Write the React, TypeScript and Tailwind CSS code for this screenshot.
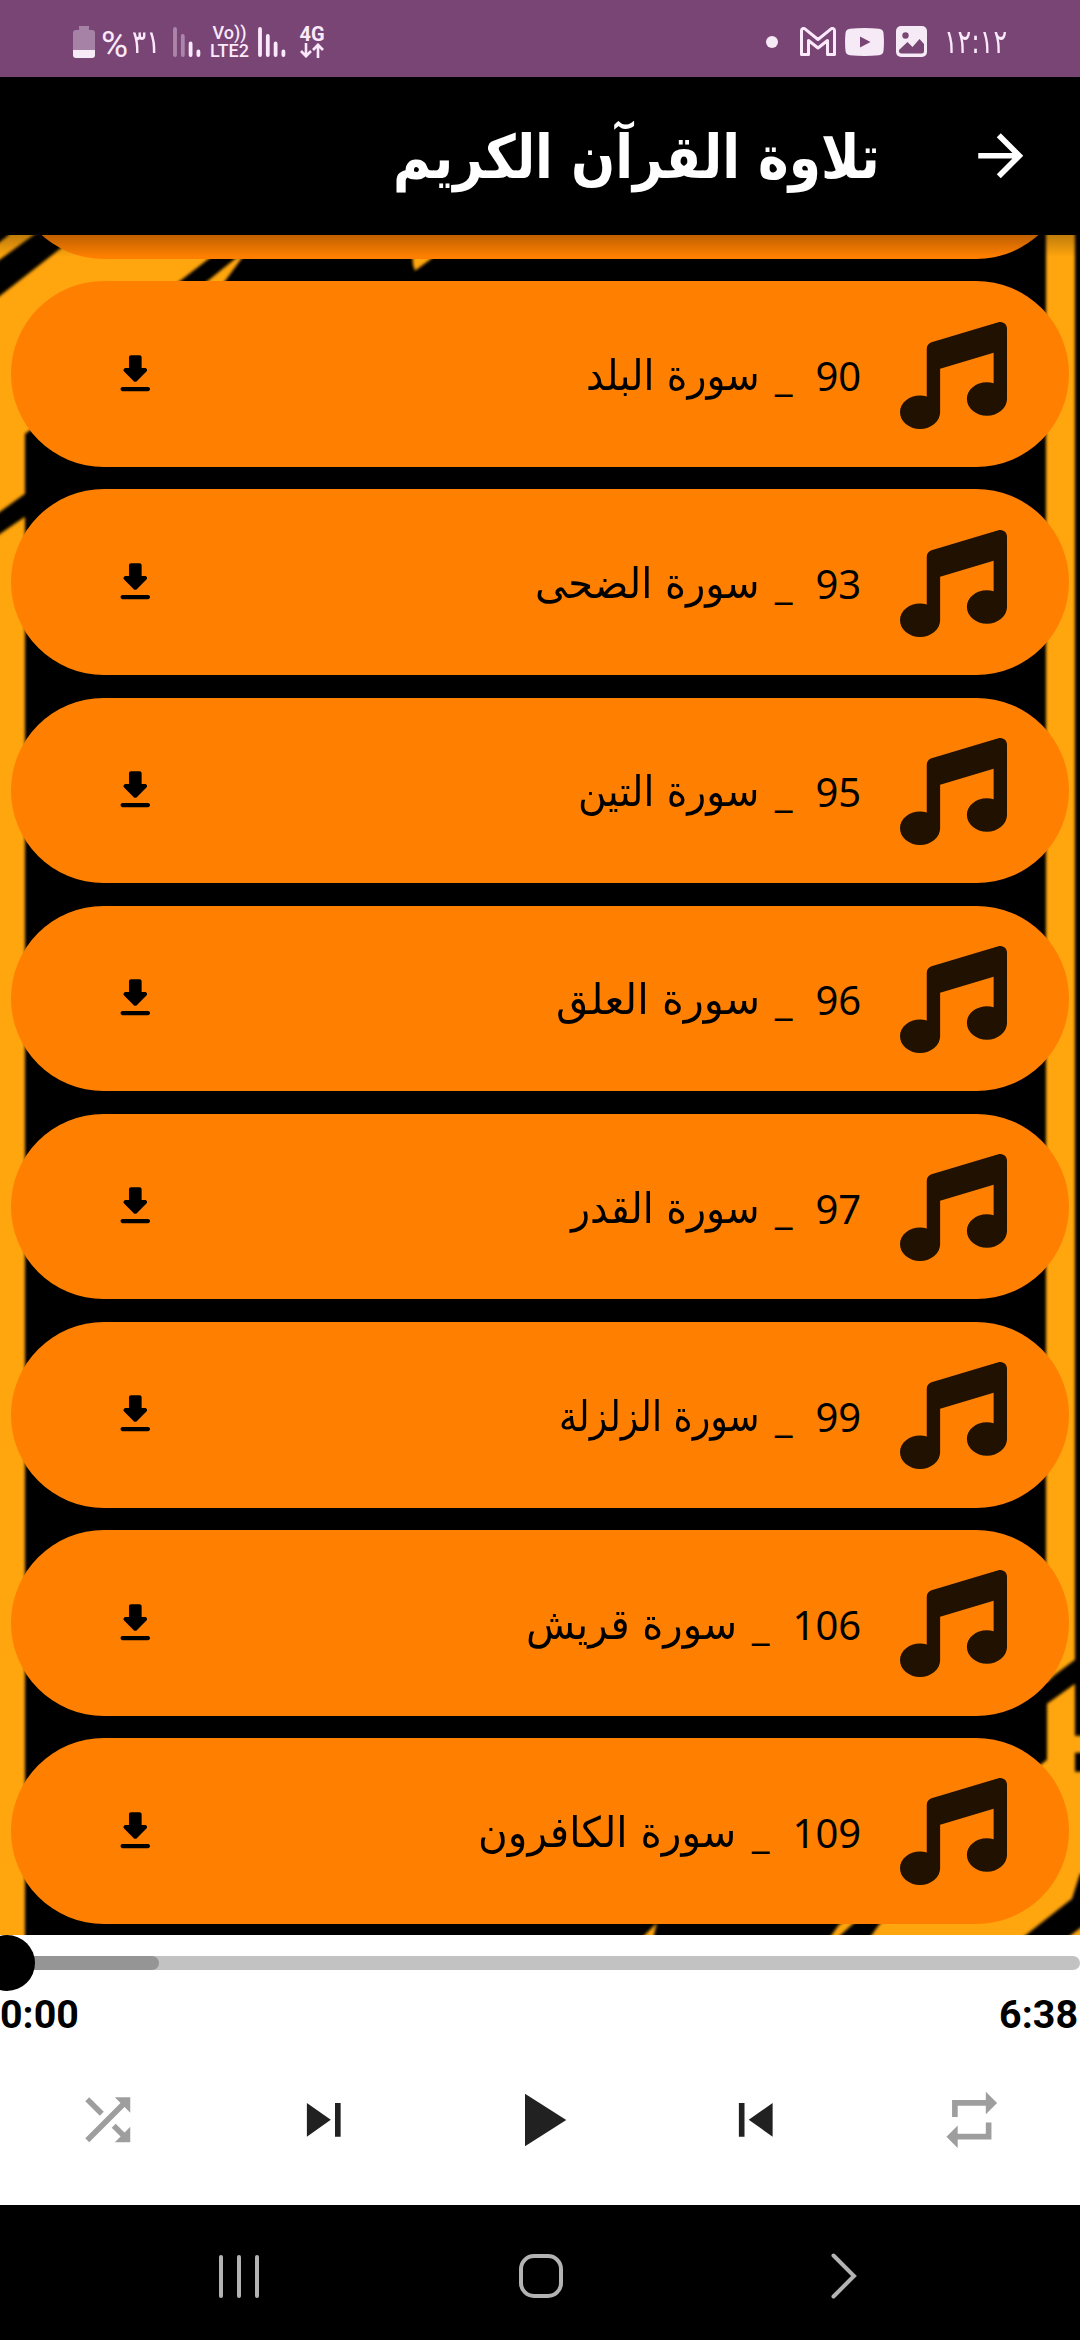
import React, { useLayoutEffect, useRef, useState } from "react";
import { FaMusic } from "react-icons/fa6";
import {
  MdArrowForward,
  MdPlayArrow,
  MdRepeat,
  MdShuffle,
  MdSkipNext,
  MdSkipPrevious,
} from "react-icons/md";

const surahs = [
  { number: "90", name: "سورة البلد", width: 174 },
  { number: "93", name: "سورة الضحى", width: 225 },
  { number: "95", name: "سورة التين", width: 181 },
  { number: "96", name: "سورة العلق", width: 204 },
  { number: "97", name: "سورة القدر", width: 189 },
  { number: "99", name: "سورة الزلزلة", width: 200 },
  { number: "106", name: "سورة قريش", width: 211 },
  { number: "109", name: "سورة الكافرون", width: 258 },
];

// Squeezes a single line of text into a fixed width
const FitText = ({ text, width }: { text: string; width: number }) => {
  const ref = useRef<HTMLSpanElement>(null);
  const [scale, setScale] = useState(1);

  useLayoutEffect(() => {
    if (ref.current) setScale(width / ref.current.offsetWidth);
  }, [text, width]);

  return (
    <span dir="rtl" className="flex shrink-0 justify-start" style={{ width }}>
      <span
        ref={ref}
        className="shrink-0 origin-right whitespace-nowrap"
        style={{ transform: `scaleX(${scale})` }}
      >
        {text}
      </span>
    </span>
  );
};

const SignalBars = ({ weak = false }: { weak?: boolean }) => (
  <svg width="28" height="30" viewBox="0 0 28 30" stroke="#fbe9fb" strokeWidth="3.8" strokeLinecap="round">
    <path d="M2 2v26M9.8 9v19" opacity={weak ? 0.4 : 1} />
    <path d="M17.6 16.500v11.500M25.400 24.500v3.500" />
  </svg>
);

const StatusBar = () => (
  <div dir="ltr" className="flex h-[77px] items-center justify-between bg-[#784575] pt-[6px] pl-[73px] pr-[73px] text-[#fbe9fb]">
    <div className="flex items-center">
      <svg width="22" height="32" viewBox="0 0 22 32">
        <path d="M6 0h10v4h3a3 3 0 0 1 3 3v17H0V7a3 3 0 0 1 3-3h3z" fill="#a682a6" />
        <path d="M0 24h22v5a3 3 0 0 1-3 3H3a3 3 0 0 1-3-3z" fill="#f5eaf5" />
      </svg>
      <span className="ml-[6px] w-[28px] pt-[5px] font-['Roboto',sans-serif] text-[37px] leading-none">%</span>
      <span className="ml-[3px] font-['DejaVu_Sans',sans-serif] text-[32px] leading-none">
        <FitText text="٣١" width={28} />
      </span>
      <span className="ml-[13px]">
        <SignalBars weak />
      </span>
      <div className="ml-[9px] flex w-[39px] flex-col items-center font-['Roboto',sans-serif] text-[18px] font-medium leading-[18px]">
        <span className="whitespace-nowrap">Vo))</span>
        <span className="whitespace-nowrap">LTE2</span>
      </div>
      <span className="ml-[9px]">
        <SignalBars />
      </span>
      <div className="ml-[13px] flex w-[26px] flex-col items-center font-['Roboto',sans-serif] text-[20px] font-bold leading-[17px]">
        <span>4G</span>
        <svg width="24" height="15" viewBox="0 0 24 15" fill="none" stroke="currentColor" strokeWidth="2.600">
          <path d="M6 0v13M1 8l5 5.200L11 8M18 15V2M13 7l5-5.200L23 7" />
        </svg>
      </div>
    </div>
    <div className="flex items-center">
      <span className="h-[12px] w-[12px] rounded-full bg-[#f5eaf5]" />
      <svg className="ml-[22px]" width="36" height="29" viewBox="0 0 36 29" fill="none" stroke="currentColor" strokeWidth="3" strokeLinejoin="round">
        <path d="M1.500 27.500V3.500c0-2 2-2.600 3.400-1.600L18 12.500 31.100 1.900c1.400-1 3.400-.4 3.400 1.600v24h-7V13.500L18 21l-9.500-7.500v14z" />
      </svg>
      <svg className="ml-[9px]" width="39" height="28" viewBox="0 0 39 28">
        <path d="M5 .8Q19.500-.8 34 .8q4 .4 4.500 4.200.9 9 0 18-.5 3.800-4.500 4.200-14.500 1.600-29 0Q1 26.800.5 23q-.9-9 0-18Q1 1.200 5 .8z" fill="#f5eaf5" />
        <path d="M15 8.500v11L25.500 14z" fill="#784575" />
      </svg>
      <svg className="ml-[12px]" width="31" height="31" viewBox="0 0 31 31">
        <rect width="31" height="31" rx="5" fill="#f5eaf5" />
        <circle cx="9.500" cy="9.500" r="3.200" fill="#784575" />
        <path d="M3 24l8.500-8 5 5 7-8 4.500 5v7q0 2.500-2.500 2.500h-20Q3 27.500 3 25z" fill="#784575" />
      </svg>
      <span className="ml-[17px] font-['DejaVu_Sans',sans-serif] text-[33px] leading-none">
        <FitText text="١٢:١٢" width={63} />
      </span>
    </div>
  </div>
);

const Header = () => (
  <header className="flex h-[157.500px] items-center bg-black pr-[45.700px] text-white">
    <MdArrowForward className="h-[67.500px] w-[67.500px] shrink-0" />
    <h1 className="mr-[87px] flex pt-[2px] font-['DejaVu_Sans',sans-serif] text-[60px] font-bold leading-none">
      <FitText text="تلاوة القرآن الكريم" width={487} />
    </h1>
  </header>
);

const Backdrop = () => (
  <svg className="absolute inset-0" width="1080" height="1701" viewBox="0 234.500 1080 1700.500" fill="#ffa50a">
    <defs>
      <filter id="soft" x="-5%" y="-5%" width="110%" height="110%">
        <feGaussianBlur stdDeviation="1.500" />
      </filter>
    </defs>
    <g filter="url(#soft)">
      <path d="M-10 249L9 234V224H48L34 234L-10 266z" />
      <path d="M-10 303L0 295L78 234H240L179 281L31 429L25 433V493L0 511L-10 518z" />
      <path d="M265 234L206 281.500L200 290H218L224.500 281L259 234z" />
      <path d="M412 250H440L430 259L415 270L413 264z" />
      <path d="M-10 540L0 533L25 516V1945H-10z" />
      <path d="M1046 220H1075V1659L1055 1674L1046 1682z" />
      <path d="M1075 1683L1047 1703V1759L1030 1772L879 1924L864 1945H1012L1025 1935L1072 1898L1080 1873H1090V1771H1075V1752H1090V1735H1075z" />
      <path d="M860 1910L839 1924L826 1942H832L852 1924L868 1910z" />
      <path d="M657 1922L641 1938H653z" />
      <path d="M1090 1920L1066 1938H1090z" />
    </g>
  </svg>
);

const DownloadIcon = () => (
  <svg width="50.600" height="50.600" viewBox="0 0 24 24" fill="#000">
    <path d="M16.590 9H15V4c0-.55-.45-1-1-1h-4c-.55 0-1 .45-1 1v5H7.410c-.89 0-1.340 1.080-.71 1.710l4.590 4.590c.39.39 1.020.39 1.410 0l4.590-4.590c.63-.63.19-1.710-.7-1.710zM5 19c0 .55.45 1 1 1h12c.55 0 1-.45 1-1s-.45-1-1-1H6c-.55 0-1 .45-1 1z" />
  </svg>
);

const SurahCard = ({ number, name, width }: { number: string; name: string; width: number }) => (
  <li className="flex h-[185.625px] shrink-0 items-center rounded-full bg-[#ff8000] pr-[61.500px] pl-[98.500px] text-black">
    <FaMusic className="mt-[2px] h-[107px] w-[107px] shrink-0 text-[#211100]" />
    <div className="mr-[39px] flex pt-[4px] text-[40px] leading-[60px]">
      <span className="font-['Noto_Sans',sans-serif]">{number}</span>
      <span className="mr-[23px] font-['Noto_Sans',sans-serif]">_</span>
      <span className="mr-[15px] font-['DejaVu_Sans',sans-serif] text-[42px]">
        <FitText text={name} width={width} />
      </span>
    </div>
    <button className="mr-auto">
      <DownloadIcon />
    </button>
  </li>
);

const SurahList = () => (
  <main className="relative h-[1700.500px] overflow-hidden bg-black">
    <Backdrop />
    <ul className="relative flex h-full flex-col justify-end gap-[22.500px] px-[11.250px] pb-[11.250px]">
      <li className="h-[185.625px] shrink-0 rounded-full bg-[#ff8000]" />
      {surahs.map((s) => (
        <SurahCard key={s.number} {...s} />
      ))}
    </ul>
    <div className="absolute inset-x-0 top-0 h-[22px] bg-gradient-to-b from-black/25 to-transparent" />
  </main>
);

const Player = () => (
  <section dir="ltr" className="h-[270px] overflow-hidden bg-white">
    <div className="relative flex h-[56px] items-center">
      <div className="h-[14px] w-full rounded-full bg-[#c2c2c2]">
        <div className="h-full w-[158.500px] rounded-full bg-[#959595]" />
      </div>
      <span className="absolute left-[-21px] top-0 h-[56px] w-[56px] rounded-full bg-black" />
    </div>
    <div className="flex h-[46px] items-center justify-between pt-[1px] pr-[2px] font-['Roboto',sans-serif] text-[39.400px] font-bold leading-[46px] text-black">
      <span>0:00</span>
      <span>6:38</span>
    </div>
    <div className="mt-[38px] grid h-[90px] grid-cols-5 place-items-center text-[#212121]">
      <MdShuffle className="h-[67.500px] w-[67.500px] text-[#9e9e9e]" />
      <MdSkipNext className="h-[67.500px] w-[67.500px]" />
      <MdPlayArrow className="h-[90px] w-[90px]" />
      <MdSkipPrevious className="h-[67.500px] w-[67.500px]" />
      <MdRepeat className="h-[67.500px] w-[67.500px] text-[#9e9e9e]" />
    </div>
  </section>
);

const NavigationBar = () => (
  <nav dir="ltr" className="flex h-[135px] items-center bg-black pt-[7px] pl-[219px]">
    <div className="flex h-[43px] w-[40px] justify-between">
      <span className="w-[4px] rounded-full bg-[#b3b3b3]" />
      <span className="w-[4px] rounded-full bg-[#b3b3b3]" />
      <span className="w-[4px] rounded-full bg-[#b3b3b3]" />
    </div>
    <span className="ml-[260px] h-[44px] w-[44px] rounded-[15px] border-4 border-[#b3b3b3]" />
    <svg className="ml-[268px]" width="26" height="46" viewBox="0 0 26 46" fill="none" stroke="#b3b3b3" strokeWidth="4" strokeLinecap="round">
      <path d="M2.500 2.500L23 23L2.500 43.500" />
    </svg>
  </nav>
);

export default function App() {
  return (
    <div dir="rtl" className="flex h-[2340px] w-[1080px] flex-col overflow-hidden bg-black">
      <StatusBar />
      <Header />
      <SurahList />
      <Player />
      <NavigationBar />
    </div>
  );
}
